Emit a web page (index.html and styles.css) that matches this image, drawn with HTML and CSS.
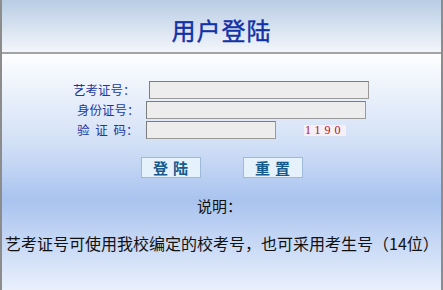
FILE: index.html
```html
<!DOCTYPE html>
<html lang="zh-CN">
<head>
<meta charset="utf-8">
<title>用户登陆</title>
<link rel="stylesheet" href="styles.css">
</head>
<body>
<div class="window">
  <div class="header"><h1 class="title">用户登陆</h1></div>
  <div class="content">
    <div class="form">
      <div class="row row1">
        <label class="label">艺考证号：</label>
        <input class="field wide" type="text">
      </div>
      <div class="row row2">
        <label class="label">身份证号：</label>
        <input class="field wide" type="text">
      </div>
      <div class="row row3">
        <label class="label spaced">验 证 码：</label>
        <input class="field narrow" type="text">
        <span class="captcha">1190</span>
      </div>
    </div>
    <div class="buttons">
      <button class="btn" type="button">登陆</button>
      <button class="btn" type="button">重置</button>
    </div>
    <div class="note-title">说明：</div>
    <div class="note">艺考证号可使用我校编定的校考号，也可采用考生号（14位）</div>
  </div>
</div>
</body>
</html>
```
FILE: styles.css
```css
html, body {
  margin: 0;
  padding: 0;
}
body {
  width: 443px;
  height: 290px;
  overflow: hidden;
  font-family: "Noto Sans CJK SC", "Noto Sans", sans-serif;
}
.window {
  width: 443px;
  height: 290px;
  box-sizing: border-box;
  border-left: 2px solid #8c8c8c;
  border-right: 2px solid #8c8c8c;
  display: flex;
  flex-direction: column;
}
.header {
  height: 54px;
  box-sizing: border-box;
  padding-top: 18px;
  border-bottom: 2px solid #a3a3a3;
  background: linear-gradient(#b8cce4, #f3f6fb);
  text-align: center;
}
.title {
  margin: 0;
  font-size: 24px;
  line-height: 24px;
  font-weight: normal;
  letter-spacing: 1px;
  color: #1230a8;
  -webkit-text-stroke: 0.4px #1230a8;
}
.content {
  flex: 1;
  background: linear-gradient(#fdfeff 0%, #d2e0f6 38%, #a9c3ef 62%, #e9f0fc 100%);
  padding-top: 26px;
}
.form {
  display: flex;
  flex-direction: column;
}
.row {
  height: 20px;
  display: flex;
  align-items: center;
}
.label {
  font-size: 12.5px;
  line-height: 14px;
  color: #1c3aa0;
  white-space: nowrap;
  width: 62px;
}
.row1 .label { margin-left: 71px; margin-right: 14px; }
.row2 .label { margin-left: 75px; margin-right: 7px; }
.row3 .label { margin-left: 75px; margin-right: 7px; }
.spaced { word-spacing: 3px; }
.field {
  height: 18px;
  box-sizing: border-box;
  margin: 0;
  padding: 0 2px;
  border: 1px solid #7d7d7d;
  border-right-color: #9a9a9a;
  border-bottom-color: #9a9a9a;
  background: #ededed;
}
.wide { width: 220px; }
.narrow { width: 130px; }
.captcha {
  margin-left: 28px;
  font-family: "Liberation Serif", serif;
  font-size: 12px;
  letter-spacing: 4px;
  color: #b0101a;
  background: #f6f0f6;
  padding: 0 1px;
  line-height: 11px;
}
.buttons {
  margin-top: 17px;
  display: flex;
  justify-content: center;
  gap: 42px;
}
.btn {
  width: 60px;
  height: 21px;
  padding: 0 0 0 5px;
  margin: 0;
  border: 1px solid #9dbbd8;
  background: #e5f1fb;
  color: #165a8c;
  font-family: "Noto Sans CJK SC", sans-serif;
  font-size: 15px;
  font-weight: bold;
  letter-spacing: 5px;
  line-height: 19px;
}
.note-title {
  margin-top: 18px;
  text-align: center;
  font-size: 15px;
  line-height: 20px;
  color: #111;
  padding-right: 4px;
}
.note {
  margin-top: 17px;
  padding-left: 3px;
  font-size: 16px;
  line-height: 20px;
  color: #111;
  white-space: nowrap;
}
```
